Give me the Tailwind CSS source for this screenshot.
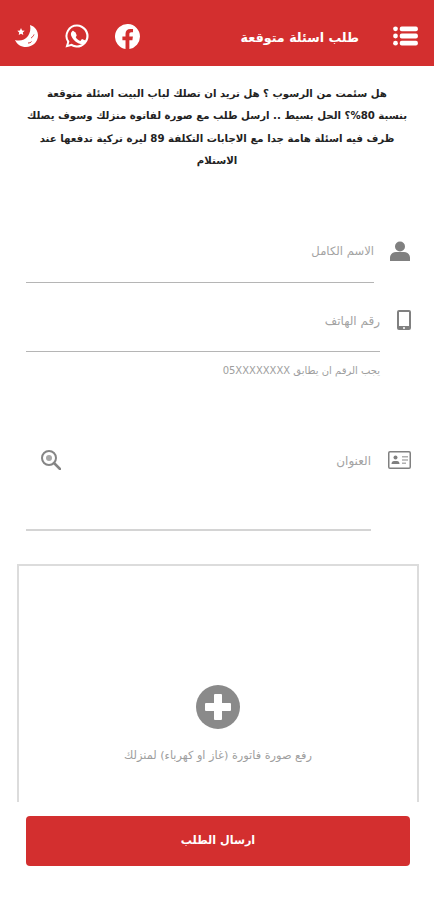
<!DOCTYPE html>
<html lang="ar">
<head>
<meta charset="utf-8">
<script src="https://cdn.jsdelivr.net/npm/@tailwindcss/browser@4"></script>
</head>
<body class="bg-white">
<div class="w-[434px] h-[900px] overflow-hidden flex flex-col font-['DejaVu_Sans',sans-serif]">
  <header class="h-[66px] shrink-0 bg-[#d32f2f] flex items-center pt-[6px] pl-[14px] pr-[16px]">
    <svg class="w-[24px] h-[24px]" viewBox="0 0 24 24" fill="#fff"><path d="M16 1c5 1.500 8 5.500 8 10.500C24 18 18.500 23 12 23 7 23 3 20.500 1 16c5 1.500 10 0 13-4 2-3 3-7 2-11z"/><path d="M7 4l1.100 2.400 2.600.3-1.900 1.800.5 2.600L7 9.800l-2.300 1.300.5-2.600-1.900-1.800 2.600-.3z"/><path d="M17 14c1-.5 2.500-2 3-3.500M14 19c1.500 0 3-.5 3.500-1.500" fill="none" stroke="#d32f2f" stroke-width="1"/></svg>
    <svg class="w-[24px] h-[24px] ml-[27px]" viewBox="0 0 24 24" fill="#fff"><path d="M12 .5A11.500 11.500 0 0 0 2.200 18L.5 23.500l5.700-1.600A11.500 11.500 0 1 0 12 .5zm0 2.100a9.400 9.400 0 1 1-5.300 17.200l-3.200.9.900-3.100A9.400 9.400 0 0 1 12 2.600zM8.200 6.800c-.3 0-.7.100-1 .5-.4.400-1.300 1.300-1.300 3s1.300 3.400 1.500 3.600c.2.300 2.600 4.100 6.400 5.500 3 1.100 3.700.6 4.300.5.700-.1 2-.8 2.300-1.600.3-.8.300-1.500.2-1.600-.1-.2-.3-.3-.7-.4l-2.400-1.100c-.4-.1-.6-.2-.9.2l-1 1.300c-.2.200-.4.300-.8.100-1.400-.6-2.700-1.300-4-3.500-.3-.5.300-.5.800-1.600.1-.2 0-.4 0-.6l-1.100-2.600c-.3-.7-.6-.6-.8-.6z"/></svg>
    <svg class="w-[25px] h-[25px] ml-[26px]" viewBox="0 0 24 24" fill="#fff"><path d="M24 12a12 12 0 1 0-13.900 11.900v-8.400H7.100V12h3V9.400c0-3 1.800-4.700 4.500-4.700 1.300 0 2.700.2 2.700.2v3h-1.500c-1.500 0-2 .9-2 1.900V12h3.400l-.5 3.500h-2.900v8.400A12 12 0 0 0 24 12z"/></svg>
    <h1 dir="rtl" class="ml-auto mr-[34px] mt-[3px] text-[12.700px] leading-[20px] font-bold text-white">طلب اسئلة متوقعة</h1>
    <svg class="w-[25px] h-[20px]" viewBox="0 0 26 21" fill="#fff"><circle cx="2.500" cy="3" r="2.500"/><circle cx="2.500" cy="10.500" r="2.500"/><circle cx="2.500" cy="18" r="2.500"/><rect x="7" y=".5" width="19" height="5" rx="2"/><rect x="7" y="8" width="19" height="5" rx="2"/><rect x="7" y="15.500" width="19" height="5" rx="2"/></svg>
  </header>

  <p dir="rtl" class="mt-[17px] text-center text-[10.200px] leading-[22.300px] font-bold text-[#222] whitespace-nowrap">هل سئمت من الرسوب ؟ هل تريد ان تصلك لباب البيت اسئلة متوقعة<br>بنسبة 80%؟ الحل بسيط .. ارسل طلب مع صورة لفاتوة منزلك وسوف يصلك<br>ظرف فيه اسئلة هامة جدا مع الاجابات التكلفة 89 ليرة تركية تدفعها عند<br>الاستلام</p>

  <div class="mt-[60px] ml-[26px] flex items-start">
    <div dir="rtl" class="w-[348px] h-[51px] border-b border-[#b5b5b5] pt-[10px] text-[11.600px] leading-[18px] text-[#a3a3a3]">الاسم الكامل</div>
    <svg class="ml-[16px] w-[20px] h-[20px] mt-[9px]" viewBox="0 0 20 20" fill="#808080"><circle cx="10" cy="5.500" r="5"/><path d="M0 17c0-4 3-6 6-6h8c3 0 6 2 6 6v3H0z"/></svg>
  </div>

  <div class="mt-[27px] ml-[26px] flex items-start">
    <div dir="rtl" class="w-[354px] h-[42px] border-b border-[#b5b5b5] pt-[2px] text-[12px] leading-[18px] text-[#a3a3a3]">رقم الهاتف</div>
    <svg class="ml-[17px] w-[14px] h-[20px]" viewBox="0 0 14 20" fill="#808080"><path fill-rule="evenodd" d="M2 0h10a2 2 0 0 1 2 2v16a2 2 0 0 1-2 2H2a2 2 0 0 1-2-2V2a2 2 0 0 1 2-2zm0 2v14h10V2z"/><circle cx="7" cy="18" r="1" fill="#fff"/></svg>
  </div>
  <p dir="rtl" class="mt-[12px] w-[380px] text-[10px] leading-[14px] text-[#9e9e9e]">يجب الرقم ان يطابق 05XXXXXXXX</p>

  <div class="mt-[73px] ml-[26px] flex items-start">
    <div class="w-[345px] h-[80px] border-b-2 border-[#d4d4d4] flex items-start justify-between">
      <svg class="ml-[15px] mt-[-1px] w-[20px] h-[20px]" viewBox="0 0 20 20" fill="none" stroke="#858585" stroke-width="2"><circle cx="8" cy="8" r="7"/><circle cx="8" cy="8" r="3" fill="#a8a8a8" stroke="none"/><path d="M13 13l6 6" stroke-width="2.500" stroke-linecap="round"/></svg>
      <span dir="rtl" class="mt-[1px] text-[12px] leading-[18px] text-[#a3a3a3]">العنوان</span>
    </div>
    <svg class="ml-[17px] w-[23px] h-[18px]" viewBox="0 0 23 18" fill="#808080"><path fill-rule="evenodd" d="M2 0h19a2 2 0 0 1 2 2v14a2 2 0 0 1-2 2H2a2 2 0 0 1-2-2V2a2 2 0 0 1 2-2zm0 1.500a.5.5 0 0 0-.5.5v14a.5.5 0 0 0 .5.5h19a.5.5 0 0 0 .5-.5V2a.5.5 0 0 0-.5-.5z"/><circle cx="7.500" cy="6.500" r="2"/><path d="M3.500 13c0-2 1-3 2.500-3h3c1.500 0 2.500 1 2.500 3z"/><path d="M14 5h6v1.500h-6zM14 8.200h6v1.500h-6zM14 11.400h4v1.500h-4z" fill="#b0b0b0"/></svg>
  </div>

  <div class="mt-[33px] ml-[17px] w-[402px] h-[238px] shrink-0 border-2 border-b-0 border-[#dcdcdc] flex flex-col items-center">
    <div class="mt-[119px] w-[44px] h-[44px] rounded-full bg-[#8a8a8a] flex items-center justify-center">
      <svg class="w-[32px] h-[32px]" viewBox="0 0 32 32" fill="#fff"><path d="M13 3h6a1 1 0 0 1 1 1v8h8a1 1 0 0 1 1 1v6a1 1 0 0 1-1 1h-8v8a1 1 0 0 1-1 1h-6a1 1 0 0 1-1-1v-8H4a1 1 0 0 1-1-1v-6a1 1 0 0 1 1-1h8V4a1 1 0 0 1 1-1z"/></svg>
    </div>
    <p dir="rtl" class="mt-[19px] text-[11.300px] leading-[16px] text-[#9e9e9e]">رفع صورة فاتورة (غاز او كهرباء) لمنزلك</p>
  </div>

  <button dir="rtl" class="mt-[14px] ml-[26px] w-[384px] h-[50px] shrink-0 bg-[#d32f2f] rounded-[4px] text-white text-[11.200px] font-bold">ارسال الطلب</button>
</div>
</body>
</html>
